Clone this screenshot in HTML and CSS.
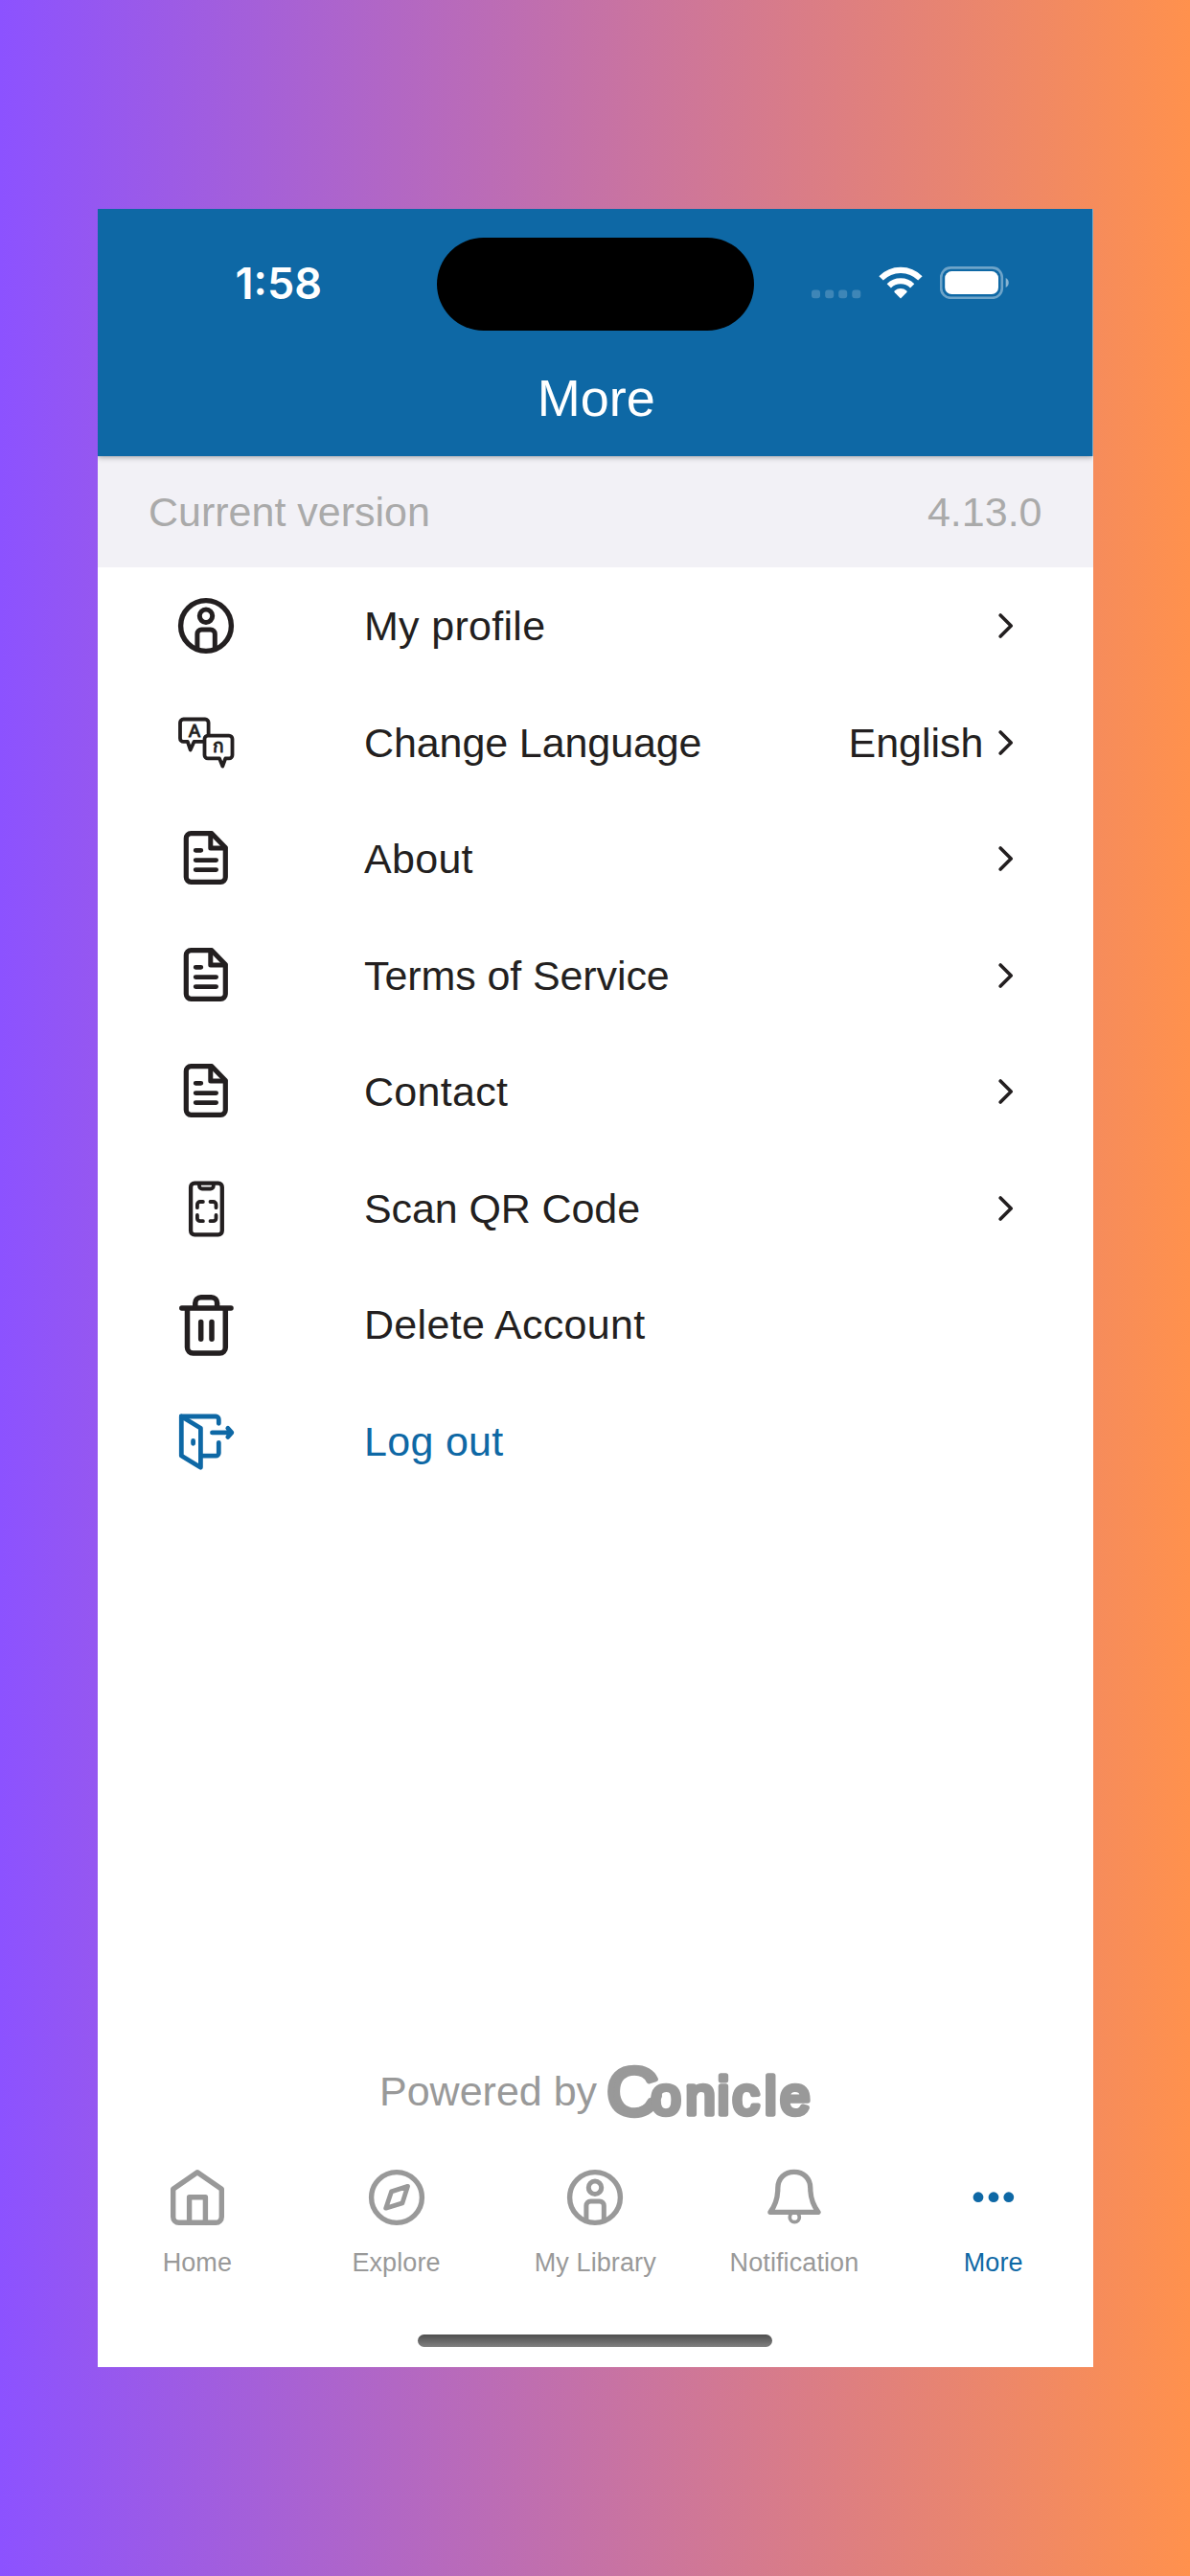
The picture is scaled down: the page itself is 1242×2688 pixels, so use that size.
FILE: index.html
```html
<!DOCTYPE html>
<html lang="en">
<head>
    <meta charset="UTF-8">
    <meta name="viewport" content="width=device-width, initial-scale=1.0">
    <title>More</title>
    <link rel="stylesheet" href="styles.css">
</head>
<body>
    <!-- shared icons -->
    <svg class="sprite" width="0" height="0">
        <symbol id="icon-person" viewBox="0 0 60 60">
            <circle cx="30" cy="30" r="26.4" stroke-width="5.4"/>
            <circle cx="30" cy="19.7" r="6.7" stroke-width="5"/>
            <path d="M20.9 54V38.5a4.5 4.5 0 0 1 4.5-4.5h9.4a4.5 4.5 0 0 1 4.5 4.5V54" stroke-width="5"/>
        </symbol>
        <symbol id="icon-doc" viewBox="0 0 60 60">
            <path d="M36 3.7H14.3a5 5 0 0 0-5 5v40.6a5 5 0 0 0 5 5h31a5 5 0 0 0 5-5V18.5z" stroke-width="5.2"/>
            <path d="M34.8 4v15h15" stroke-width="5"/>
            <path d="M19.2 21.3h5.6M19.2 31.6h21.4M19.2 41.6h21.4" stroke-width="4.8"/>
        </symbol>
        <symbol id="icon-chevron" viewBox="0 0 16 28">
            <path d="M2.2 3l11 11-11 11" stroke-width="3.6"/>
        </symbol>
    </svg>

    <div class="phone">
        <header class="header">
            <div class="status-bar">
                <div class="time">1:58</div>
                <div class="island"></div>
                <div class="status-icons">
                    <svg class="signal" width="52" height="34" viewBox="0 0 52 34">
                        <rect x="0" y="24.5" width="9" height="8.8" rx="3"/>
                        <rect x="14.2" y="24.5" width="9" height="8.8" rx="3"/>
                        <rect x="28.2" y="24.5" width="9" height="8.8" rx="3"/>
                        <rect x="42.3" y="24.5" width="9" height="8.8" rx="3"/>
                    </svg>
                    <svg class="wifi" width="46" height="34" viewBox="0 0 46 34">
                        <path d="M2.6 12.4a28.5 28.5 0 0 1 40.8 0" stroke-width="6.2"/>
                        <path d="M10.8 20.3a17.2 17.2 0 0 1 24.4 0" stroke-width="6"/>
                        <path class="wifi-dot" d="M23 33.4l6.2-6.2c.7-.8.6-1.4-.1-2a9.5 9.5 0 0 0-12.2 0c-.7.6-.8 1.2-.1 2z"/>
                    </svg>
                    <svg class="battery" width="74" height="34" viewBox="0 0 74 34">
                        <rect class="battery-case" x="1.2" y="1.4" width="63.6" height="31.4" rx="10"/>
                        <rect x="5.2" y="5.1" width="55.8" height="24" rx="7"/>
                        <path class="battery-cap" d="M68.7 12a5.6 5.6 0 0 1 0 10z"/>
                    </svg>
                </div>
            </div>
            <div class="title">More</div>
        </header>

        <div class="version">
            <span>Current version</span>
            <span>4.13.0</span>
        </div>

        <ul class="menu">
            <li class="menu-item">
                <svg class="icon"><use href="#icon-person"/></svg>
                <span class="label wide">My profile</span>
                <svg class="chevron"><use href="#icon-chevron"/></svg>
            </li>
            <li class="menu-item">
                <svg class="icon" viewBox="0 0 60 60" stroke-width="3.8">
                    <path d="M26.5 28.9h-9l-3.8 8.6-2.9-8.6H6.5A3.5 3.5 0 0 1 3 25.4V9a3.5 3.5 0 0 1 3.5-3.5h22.6A3.5 3.5 0 0 1 32.6 9v12"/>
                    <path d="M32 22.6h22a3.5 3.5 0 0 1 3.5 3.5v16.8a3.5 3.5 0 0 1-3.5 3.5h-3.7l-3 8.1-3.3-8.1H32a3.5 3.5 0 0 1-3.5-3.5V26.1a3.5 3.5 0 0 1 3.5-3.5z"/>
                    <text class="glyph" x="18" y="24.3" font-size="18">A</text>
                    <text class="glyph" x="43" y="39.5" font-size="19">ก</text>
                </svg>
                <span class="label">Change Language</span>
                <span class="value">English</span>
                <svg class="chevron"><use href="#icon-chevron"/></svg>
            </li>
            <li class="menu-item">
                <svg class="icon"><use href="#icon-doc"/></svg>
                <span class="label wide">About</span>
                <svg class="chevron"><use href="#icon-chevron"/></svg>
            </li>
            <li class="menu-item">
                <svg class="icon"><use href="#icon-doc"/></svg>
                <span class="label">Terms of Service</span>
                <svg class="chevron"><use href="#icon-chevron"/></svg>
            </li>
            <li class="menu-item">
                <svg class="icon"><use href="#icon-doc"/></svg>
                <span class="label wide">Contact</span>
                <svg class="chevron"><use href="#icon-chevron"/></svg>
            </li>
            <li class="menu-item">
                <svg class="icon" viewBox="0 0 60 60">
                    <rect x="14.1" y="3.7" width="32.7" height="53.6" rx="4" stroke-width="4.3"/>
                    <path d="M23 4v2.5a3 3 0 0 0 3 3h8.8a3 3 0 0 0 3-3V4" stroke-width="3.8"/>
                    <path d="M20.9 29.2V26a3 3 0 0 1 3-3h3M34.5 23h3a3 3 0 0 1 3 3v3.2M40.5 37v3.2a3 3 0 0 1-3 3h-3M26.9 43.2h-3a3 3 0 0 1-3-3V37" stroke-width="3.8"/>
                </svg>
                <span class="label">Scan QR Code</span>
                <svg class="chevron"><use href="#icon-chevron"/></svg>
            </li>
            <li class="menu-item">
                <svg class="icon" viewBox="0 0 60 60" stroke-width="5.5">
                    <path d="M4.8 13H56M10.5 13v41a6 6 0 0 0 6 6h27.8a6 6 0 0 0 6-6V13"/>
                    <path d="M18.8 12V7.8a6 6 0 0 1 6-6h10.8a6 6 0 0 1 6 6V12M24.7 27.5v17.8M36 27.5v17.8"/>
                </svg>
                <span class="label wide">Delete Account</span>
            </li>
            <li class="menu-item logout">
                <svg class="icon" viewBox="0 0 60 60" stroke-width="4.8">
                    <path d="M4.3 4l20.1 12.2v41.1L4.3 45z"/>
                    <path d="M4.3 4h36a3 3 0 0 1 3 3v4.3M24.4 45.2h15.9a3 3 0 0 0 3-3V31.3"/>
                    <path d="M36.5 20.9h20.3M52.8 16.3l4 4.6-4 4.6M16.6 29.5v2.8"/>
                </svg>
                <span class="label wide">Log out</span>
            </li>
        </ul>

        <footer class="footer">
            <div class="powered">
                <span>Powered by</span>
                <svg class="logo" width="214" height="62" viewBox="634 2152 214 62">
                    <text x="634.3" y="2206.5" font-size="70" textLength="54" lengthAdjust="spacingAndGlyphs">C</text>
                    <!-- tail joining the C to the o -->
                    <path d="M670 2203.5Q681 2200 687 2187" stroke-width="10"/>
                    <text x="680.5" y="2205.9" font-size="56">o</text>
                    <text x="716.4" y="2205.9" font-size="56">n</text>
                    <text x="749.7" y="2205.9" font-size="56">i</text>
                    <text x="765.5" y="2205.9" font-size="56">c</text>
                    <text x="799" y="2205.9" font-size="56">l</text>
                    <text x="815.2" y="2205.9" font-size="56">e</text>
                </svg>
            </div>

            <nav class="tabs">
                <div class="tab">
                    <svg class="icon" viewBox="0 0 60 60" stroke-width="5.4">
                        <path d="M30 3.7L4.7 21.2v29.1a6 6 0 0 0 6 6h38.6a6 6 0 0 0 6-6V21.2z"/>
                        <path d="M21.6 56V29.7h16.8V56"/>
                    </svg>
                    <span>Home</span>
                </div>
                <div class="tab">
                    <svg class="icon" viewBox="0 0 60 60">
                        <circle cx="30" cy="30" r="26.4" stroke-width="5.4"/>
                        <path d="M41.5 18.4l-17 5.5-5.8 17.3 17.2-5.3z" stroke-width="4.8"/>
                    </svg>
                    <span>Explore</span>
                </div>
                <div class="tab">
                    <svg class="icon"><use href="#icon-person"/></svg>
                    <span>My Library</span>
                </div>
                <div class="tab">
                    <svg class="icon" viewBox="0 0 60 60">
                        <path d="M4.9 45.3C10.5 38 12.8 30 12.8 20.5C12.8 10 20 3.4 29.8 3.4S46.8 10 46.8 20.5C46.8 30 49.5 38 55 45.3z" stroke-width="5.3"/>
                        <circle cx="30.3" cy="50.7" r="5" stroke-width="3.7"/>
                    </svg>
                    <span>Notification</span>
                </div>
                <div class="tab active">
                    <svg class="icon dots" viewBox="0 0 60 60">
                        <circle cx="14" cy="29.7" r="5.4"/>
                        <circle cx="30" cy="29.7" r="5.4"/>
                        <circle cx="45.8" cy="29.7" r="5.4"/>
                    </svg>
                    <span>More</span>
                </div>
            </nav>

            <div class="home-indicator"></div>
        </footer>
    </div>
</body>
</html>
```
FILE: styles.css
```css
* {
    box-sizing: border-box;
}
body {
    margin: 0;
    height: 2688px;
    padding: 218px 0 0 102px;
    font-family: "Liberation Sans", Arial, sans-serif;
    font-size: 43px;
    color: #231f20;
    background: linear-gradient(90deg, #8c52ff, #ff914d);
}
.sprite {
    display: none;
}
.phone {
    width: 1038.5px;
    height: 2252px;
    background: #ffffff;
    display: flex;
    flex-direction: column;
}

/* Header */
.header {
    position: relative;
    height: 258px;
    background: #0e68a5;
    color: #ffffff;
    box-shadow: 0 1px 6px rgba(0, 0, 0, 0.35);
    clip-path: inset(0 0 -12px 0);
}
.status-bar {
    display: grid;
    grid-template-columns: 353.5px 331px 1fr;
    padding-top: 29.7px;
}
.time {
    font-family: Inter, "Liberation Sans", sans-serif;
    font-weight: 600;
    font-size: 45px;
    line-height: 96px;
    text-align: center;
    padding-left: 24px;
}
.island {
    height: 97.3px;
    border-radius: 49px;
    background: #000000;
}
.status-icons {
    display: flex;
    padding: 30.3px 0 0 60px;
}
.status-icons svg {
    fill: #ffffff;
}
.status-icons .signal {
    opacity: 0.2;
}
.status-icons .wifi {
    margin: 0 18px;
    fill: none;
    stroke: #ffffff;
}
.wifi .wifi-dot {
    fill: #ffffff;
    stroke: none;
}
.battery .battery-case {
    fill: none;
    stroke: #ffffff;
    stroke-width: 2.6;
    opacity: 0.4;
}
.battery .battery-cap {
    opacity: 0.5;
}
.title {
    margin-top: 40px;
    padding-left: 2px;
    font-size: 54px;
    line-height: 60px;
    text-align: center;
}

/* Version row */
.version {
    height: 116.3px;
    padding: 1px 53px 0;
    display: flex;
    align-items: center;
    justify-content: space-between;
    background: #f2f1f6;
    color: #aaaaaa;
}

/* Menu */
.menu {
    flex: 1;
    margin: 0;
    padding: 0;
    list-style: none;
}
.menu-item {
    display: flex;
    align-items: center;
    height: 121.5px;
    padding: 0 83px;
}
.icon {
    width: 60px;
    height: 60px;
    overflow: visible;
    fill: none;
    stroke: currentColor;
    stroke-linecap: round;
    stroke-linejoin: round;
}
.icon .glyph {
    fill: currentColor;
    stroke-width: 1;
    text-anchor: middle;
}
.label {
    flex: 1;
    margin-left: 135px;
    padding-top: 1px;
    letter-spacing: -0.1px;
}
.label.wide {
    letter-spacing: 0.3px;
}
.value {
    margin-right: 15px;
    padding-top: 1px;
}
.chevron {
    width: 16px;
    height: 28px;
    fill: none;
    stroke: currentColor;
    stroke-linecap: round;
    stroke-linejoin: round;
}
.logout {
    color: #0e68a5;
}

/* Footer */
.footer {
    color: #999999;
}
.powered {
    display: flex;
    align-items: center;
    padding-left: 294px;
    height: 62px;
}
.logo {
    margin-left: 10px;
    overflow: visible;
    fill: currentColor;
    stroke: currentColor;
    stroke-width: 5.5;
    stroke-linejoin: round;
    stroke-linecap: round;
}
.logo path {
    fill: none;
}
.tabs {
    display: grid;
    grid-template-columns: repeat(5, 1fr);
    padding-top: 49px;
    font-size: 27px;
}
.tab {
    display: flex;
    flex-direction: column;
    align-items: center;
    gap: 23px;
    line-height: 31px;
    letter-spacing: 0.1px;
}
.tab.active {
    color: #0e68a5;
}
.icon.dots {
    fill: currentColor;
    stroke: none;
}
.home-indicator {
    width: 370px;
    height: 13.5px;
    margin: 59px auto 21px;
    border-radius: 7px;
    background: linear-gradient(#4f4f4f, #808080);
}
```
